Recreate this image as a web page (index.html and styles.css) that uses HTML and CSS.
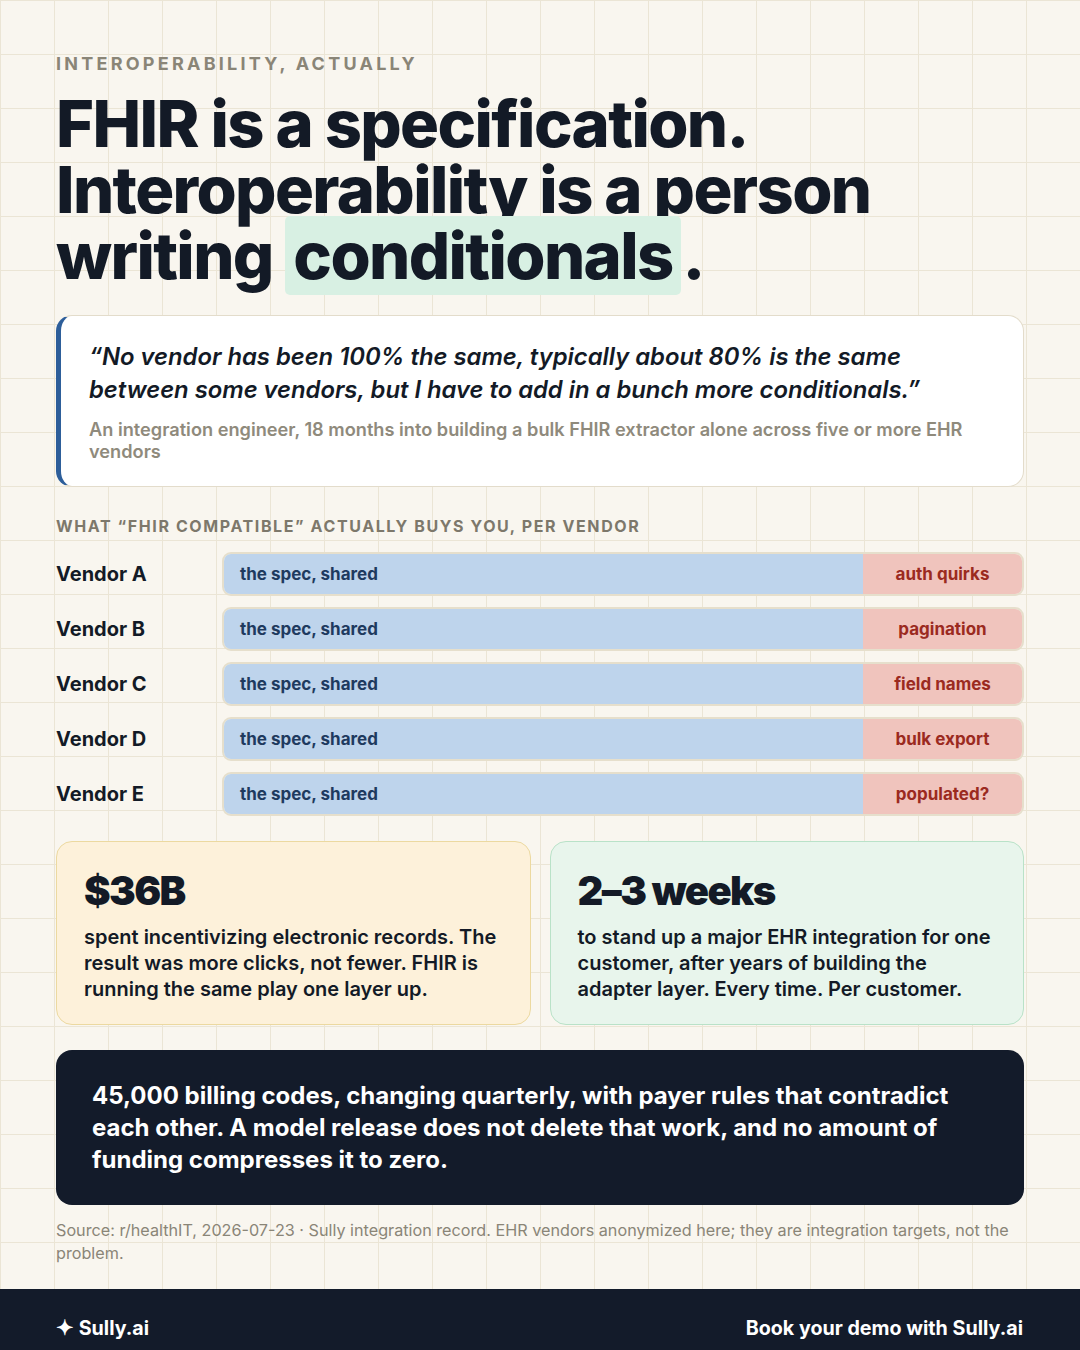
FILE: index.html
```html
<!DOCTYPE html>
<html lang="en">
<head>
<meta charset="utf-8">
<title>FHIR is a specification</title>
<link rel="stylesheet" href="styles.css">
</head>
<body>
<div class="page">
  <main class="main">
    <div class="eyebrow">INTEROPERABILITY, ACTUALLY</div>
    <h1 class="headline">FHIR is a specification.<br>Interoperability is a person<br>writing <span class="hl">conditionals</span>.</h1>

    <section class="quote-card">
      <p class="quote">“No vendor has been 100% the same, typically about 80% is the same between some vendors, but I have to add in a bunch more conditionals.”</p>
      <p class="attrib">An integration engineer, 18 months into building a bulk FHIR extractor alone across five or more EHR vendors</p>
    </section>

    <div class="section-label">WHAT “FHIR COMPATIBLE” ACTUALLY BUYS YOU, PER VENDOR</div>
    <div class="rows">
      <div class="row"><div class="vendor">Vendor A</div><div class="bar"><div class="shared">the spec, shared</div><div class="quirk">auth quirks</div></div></div>
      <div class="row"><div class="vendor">Vendor B</div><div class="bar"><div class="shared">the spec, shared</div><div class="quirk">pagination</div></div></div>
      <div class="row"><div class="vendor">Vendor C</div><div class="bar"><div class="shared">the spec, shared</div><div class="quirk">field names</div></div></div>
      <div class="row"><div class="vendor">Vendor D</div><div class="bar"><div class="shared">the spec, shared</div><div class="quirk">bulk export</div></div></div>
      <div class="row"><div class="vendor">Vendor E</div><div class="bar"><div class="shared">the spec, shared</div><div class="quirk">populated?</div></div></div>
    </div>

    <div class="stats">
      <div class="stat stat-yellow">
        <div class="stat-num">$36B</div>
        <p class="stat-text">spent incentivizing electronic records. The result was more clicks, not fewer. FHIR is running the same play one layer up.</p>
      </div>
      <div class="stat stat-green">
        <div class="stat-num">2–3 weeks</div>
        <p class="stat-text">to stand up a major EHR integration for one customer, after years of building the adapter layer. Every time. Per customer.</p>
      </div>
    </div>

    <div class="dark-box">45,000 billing codes, changing quarterly, with payer rules that contradict each other. A model release does not delete that work, and no amount of funding compresses it to zero.</div>

    <p class="source">Source: r/healthIT, 2026-07-23 · Sully integration record. EHR vendors anonymized here; they are integration targets, not the problem.</p>
  </main>
  <footer class="footer">
    <div class="brand"><span class="spark">✦</span> Sully.ai</div>
    <div class="cta">Book your demo with Sully.ai</div>
  </footer>
</div>
</body>
</html>
```

FILE: styles.css
```css
* { box-sizing: border-box; }
html, body { margin: 0; padding: 0; }
body {
  width: 1080px;
  height: 1350px;
  overflow: hidden;
  font-family: Inter, "Noto Sans", "Liberation Sans", sans-serif;
  color: #131a26;
  background-color: #f9f6ef;
  background-image:
    linear-gradient(to right, #ebe5d5 1px, transparent 1px),
    linear-gradient(to bottom, #ebe5d5 1px, transparent 1px);
  background-size: 54px 54px;
}
.page {
  height: 1350px;
  display: flex;
  flex-direction: column;
}
.main {
  flex: 1;
  padding: 54px 56px 0 56px;
  display: flex;
  flex-direction: column;
}
.eyebrow {
  font-size: 18px;
  line-height: 20px;
  font-weight: 700;
  letter-spacing: 0.18em;
  color: #8a8577;
}
.headline {
  margin: 17px 0 0 0;
  font-size: 65px;
  line-height: 66px;
  font-weight: 800;
  letter-spacing: -0.025em;
  color: #131a26;
}
.hl {
  background: #d8f0e3;
  border-radius: 5px;
  padding: 0 8px;
  margin-right: 2px;
}
.quote-card {
  margin-top: 26px;
  background: #ffffff;
  border: 1px solid #e3dccb;
  border-left: 5px solid #2d5e9a;
  border-radius: 16px;
  padding: 24px 40px 24px 28px;
}
.quote {
  margin: 0;
  font-size: 23.8px;
  line-height: 33px;
  font-style: italic;
  font-weight: 600;
  color: #131a26;
}
.attrib {
  margin: 12px 0 0 0;
  font-size: 18.2px;
  line-height: 22px;
  font-weight: 600;
  color: #8f8a7c;
}
.section-label {
  margin-top: 30px;
  font-size: 16px;
  line-height: 18px;
  font-weight: 700;
  letter-spacing: 0.1em;
  color: #7d786b;
}
.rows {
  margin-top: 17px;
  display: flex;
  flex-direction: column;
  gap: 11px;
}
.row {
  display: flex;
  align-items: center;
  height: 44px;
}
.vendor {
  width: 166px;
  flex-shrink: 0;
  font-size: 20px;
  font-weight: 700;
  color: #131a26;
}
.bar {
  flex: 1;
  height: 44px;
  display: flex;
  border: 2px solid #e6dfcc;
  border-radius: 9px;
  overflow: hidden;
}
.shared {
  flex: 1;
  background: #bed4ec;
  color: #1e3a5f;
  font-size: 17px;
  font-weight: 700;
  display: flex;
  align-items: center;
  padding-left: 16px;
}
.quirk {
  width: 159px;
  background: #f0c4bd;
  color: #9b2a1f;
  font-size: 17px;
  font-weight: 700;
  display: flex;
  align-items: center;
  justify-content: center;
}
.stats {
  margin-top: 25px;
  display: grid;
  grid-template-columns: 1fr 1fr;
  gap: 19px;
}
.stat {
  border-radius: 16px;
  padding: 29px 26px 24px 27px;
  height: 184px;
}
.stat-yellow {
  background: #fdf1da;
  border: 1.5px solid #ecd9a0;
}
.stat-green {
  background: #e8f5ec;
  border: 1.5px solid #b9e2c8;
}
.stat-num {
  font-size: 40px;
  line-height: 40px;
  font-weight: 900;
  letter-spacing: -0.04em;
  color: #131a26;
}
.stat-text {
  margin: 13px 0 0 0;
  font-size: 20px;
  line-height: 26px;
  font-weight: 600;
  color: #131a26;
}
.dark-box {
  margin-top: 25px;
  background: #131b2a;
  border-radius: 16px;
  padding: 30px 60px 29px 36px;
  color: #ffffff;
  font-size: 24px;
  line-height: 32px;
  font-weight: 700;
}
.source {
  margin: 14px 0 0 0;
  font-size: 16.2px;
  line-height: 23px;
  color: #8a8577;
}
.footer {
  height: 61px;
  flex-shrink: 0;
  background: #131b2a;
  color: #ffffff;
  display: flex;
  justify-content: space-between;
  align-items: flex-start;
  padding: 27px 57px 0 56px;
  font-size: 19.7px;
  line-height: 24px;
  font-weight: 700;
}
.spark {
  font-size: 21px;
}
```
